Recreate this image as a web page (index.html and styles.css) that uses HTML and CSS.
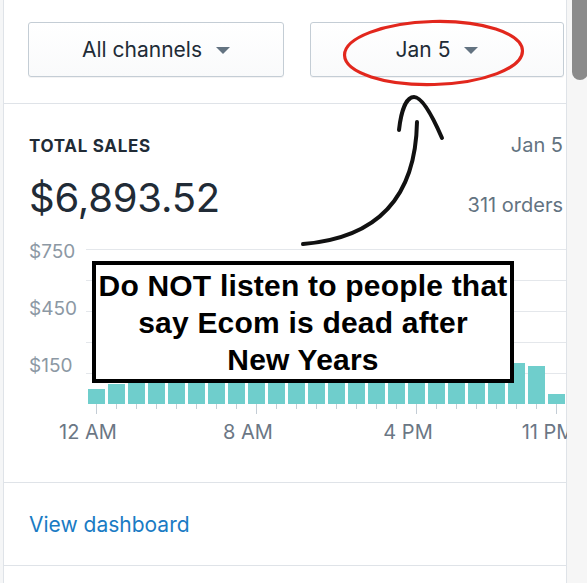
FILE: index.html
```html
<!DOCTYPE html>
<html>
<head>
<meta charset="utf-8">
<link rel="stylesheet" href="styles.css">
</head>
<body>
<div class="screen">
  <div class="panel">
    <div class="filters">
      <button class="select select-wide">All channels <span class="caret"></span></button>
      <button class="select select-fill">Jan 5 <span class="caret"></span></button>
    </div>
    <section class="sales">
      <div class="row head"><span class="title">TOTAL SALES</span><span class="muted">Jan 5</span></div>
      <div class="row totals"><span class="amount">$6,893.52</span><span class="muted">311 orders</span></div>
      <div class="chart">
        <div class="ylabels"><span>$750</span><span>$450</span><span>$150</span></div>
        <div class="plot">
          <div class="bars">
            <i style="height:15px"></i><i style="height:20px"></i><i style="height:22px"></i><i style="height:24px"></i>
            <i style="height:26px"></i><i style="height:28px"></i><i style="height:30px"></i><i style="height:26px"></i>
            <i style="height:24px"></i><i style="height:28px"></i><i style="height:30px"></i><i style="height:26px"></i>
            <i style="height:24px"></i><i style="height:28px"></i><i style="height:30px"></i><i style="height:26px"></i>
            <i style="height:24px"></i><i style="height:28px"></i><i style="height:30px"></i><i style="height:34px"></i>
            <i style="height:36px"></i><i style="height:41px"></i><i style="height:38px"></i><i style="height:10px"></i>
          </div>
          <div class="ticks">
            <b class="major"></b><b></b><b></b><b></b><b></b><b></b><b></b><b></b>
            <b class="major"></b><b></b><b></b><b></b><b></b><b></b><b></b><b></b>
            <b class="major"></b><b></b><b></b><b></b><b></b><b></b><b></b><b class="major"></b>
          </div>
          <div class="xlabels">
            <span class="xl c1">12 AM</span>
            <span class="xl c9">8 AM</span>
            <span class="xl c17">4 PM</span>
            <span class="xl c24">11 PM</span>
          </div>
        </div>
      </div>
    </section>
    <div class="footer"><a class="link" href="#">View dashboard</a></div>
  </div>
  <div class="gutter"><div class="thumb"></div></div>

  <div class="note">Do NOT listen to people that<br>say Ecom is dead after<br>New Years</div>

  <svg class="marks" width="587" height="583" viewBox="0 0 587 583">
    <ellipse cx="433.5" cy="53" rx="89" ry="31.5" fill="none" stroke="#e2271d" stroke-width="3.2" transform="rotate(-1.5 433.5 53)"/>
    <path d="M303 244 Q 415 235 417 122" fill="none" stroke="#111" stroke-width="4" stroke-linecap="round"/>
    <path d="M399 130 C 401 112, 406 97, 414 97 C 422 97, 432 115, 442 138" fill="none" stroke="#111" stroke-width="4" stroke-linecap="round"/>
  </svg>
</div>
</body>
</html>
```

FILE: styles.css
```css
* { box-sizing: border-box; }
html, body { margin: 0; padding: 0; }
body {
  background: #f5f6f7;
  font-family: "Inter", "Liberation Sans", sans-serif;
  color: #212b36;
}
.screen {
  position: relative;
  width: 587px;
  height: 583px;
  display: flex;
  overflow: hidden;
}
.panel {
  margin-left: 3px;
  width: 564px;
  height: 583px;
  background: #fff;
  border-left: 1px solid #dfe3e8;
  border-right: 1px solid #dfe3e8;
}
.filters {
  display: flex;
  gap: 26px;
  padding: 22px 2px 26px 24px;
  border-bottom: 1px solid #dfe3e8;
}
.select {
  height: 55px;
  border: 1px solid #c4cdd5;
  border-radius: 3px;
  background: linear-gradient(#ffffff, #f9fafb);
  box-shadow: 0 1px 0 rgba(22, 29, 37, 0.05);
  font-family: inherit;
  font-size: 21px;
  color: #212b36;
  display: flex;
  align-items: center;
  justify-content: center;
  gap: 14px;
  padding: 0;
}
.select-wide { width: 256px; }
.select-fill { flex: 1; }
.caret {
  width: 0;
  height: 0;
  border-left: 7px solid transparent;
  border-right: 7px solid transparent;
  border-top: 7px solid #637381;
  margin-top: 2px;
}
.sales {
  padding: 29px 0 39px 25px;
  border-bottom: 1px solid #dfe3e8;
}
.row {
  display: flex;
  justify-content: space-between;
  align-items: baseline;
  padding-right: 3px;
}
.title {
  font-size: 17px;
  font-weight: 700;
  letter-spacing: 0.7px;
  line-height: 22px;
}
.muted {
  font-size: 20px;
  color: #637381;
}
.totals { margin-top: 17px; }
.amount {
  font-size: 40px;
  line-height: 48px;
  letter-spacing: -0.2px;
}
.chart {
  margin-top: 27px;
  display: flex;
}
.ylabels {
  width: 57px;
  display: flex;
  flex-direction: column;
  gap: 37px;
  margin-top: -7px;
  font-size: 19px;
  line-height: 20px;
  color: #8c98a4;
}
.plot { width: 480px; }
.bars {
  height: 155px;
  display: flex;
  align-items: flex-end;
  gap: 3px;
  padding-left: 2px;
  background: repeating-linear-gradient(to bottom, #e4e7eb 0 1px, transparent 1px 31px);
}
.bars i {
  display: block;
  width: 17px;
  background: #6fcecc;
}
.ticks {
  display: flex;
  gap: 3px;
  padding-left: 2px;
  height: 12px;
}
.ticks b {
  width: 17px;
  height: 5px;
  background: linear-gradient(to right, transparent 8px, #c4cdd5 8px 9px, transparent 9px);
}
.ticks b.major { height: 10px; }
.xlabels {
  display: grid;
  grid-template-columns: repeat(24, 20px);
  padding-left: 2px;
  margin-top: 5px;
  font-size: 20px;
  line-height: 22px;
  color: #6b7785;
}
.xl {
  width: 0;
  display: flex;
  justify-content: center;
  white-space: nowrap;
}
.c1 { grid-column: 1; }
.c9 { grid-column: 9; }
.c17 { grid-column: 17; }
.c24 { grid-column: 24; }
.footer {
  height: 83px;
  display: flex;
  align-items: center;
  padding-left: 25px;
  border-bottom: 1px solid #dfe3e8;
}
.link {
  color: #1a7bc4;
  font-size: 21px;
  text-decoration: none;
}
.gutter {
  position: relative;
  flex: 1;
  background: #f6f6f6;
}
.thumb {
  position: absolute;
  left: 5px;
  top: -10px;
  width: 16px;
  height: 90px;
  border-radius: 8px;
  background: #8b8b8b;
}
.note {
  position: absolute;
  left: 92px;
  top: 261px;
  width: 422px;
  height: 122px;
  border: 4px solid #000;
  background: #fff;
  font-family: "Liberation Sans", Arial, sans-serif;
  font-weight: 700;
  font-size: 30px;
  line-height: 37px;
  letter-spacing: 0.2px;
  text-align: center;
  color: #000;
  padding-top: 2px;
  white-space: nowrap;
}
.marks {
  position: absolute;
  left: 0;
  top: 0;
  pointer-events: none;
}
```
